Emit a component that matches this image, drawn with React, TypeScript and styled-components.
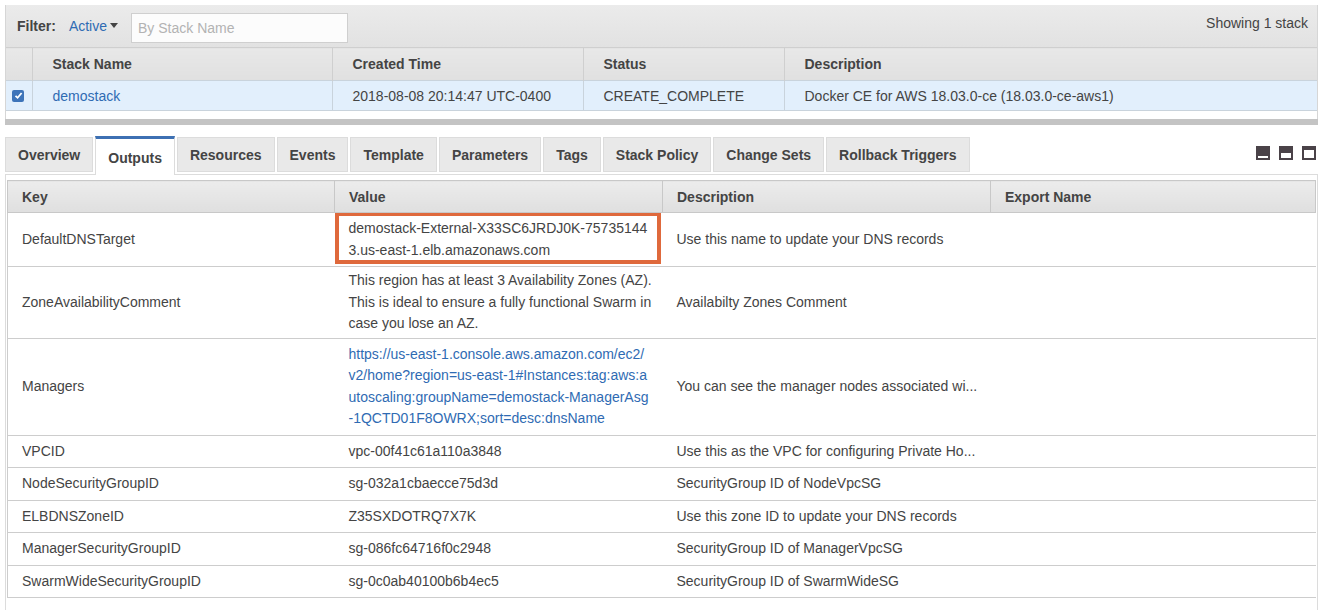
import React from 'react';
import styled, { createGlobalStyle } from 'styled-components';

const GlobalStyle = createGlobalStyle`
  body {
    margin: 0;
    background: #fff;
    font-family: "Liberation Sans", Arial, Helvetica, sans-serif;
    font-size: 14px;
    color: #444;
  }
`;

const LINK = '#2f6bb3';

interface Output {
  key: string;
  value: string[];
  description: string;
  link?: boolean;
  highlight?: boolean;
  compact?: boolean;
}

const OUTPUTS: Array<Output> = [
  {
    key: 'DefaultDNSTarget',
    value: ['demostack-External-X33SC6JRDJ0K-75735144', '3.us-east-1.elb.amazonaws.com'],
    description: 'Use this name to update your DNS records',
    highlight: true,
  },
  {
    key: 'ZoneAvailabilityComment',
    value: [
      'This region has at least 3 Availability Zones (AZ).',
      'This is ideal to ensure a fully functional Swarm in',
      'case you lose an AZ.',
    ],
    description: 'Availabilty Zones Comment',
    compact: true,
  },
  {
    key: 'Managers',
    value: [
      'https://us-east-1.console.aws.amazon.com/ec2/',
      'v2/home?region=us-east-1#Instances:tag:aws:a',
      'utoscaling:groupName=demostack-ManagerAsg',
      '-1QCTD01F8OWRX;sort=desc:dnsName',
    ],
    description: 'You can see the manager nodes associated wi...',
    link: true,
  },
  { key: 'VPCID', value: ['vpc-00f41c61a110a3848'], description: 'Use this as the VPC for configuring Private Ho...' },
  { key: 'NodeSecurityGroupID', value: ['sg-032a1cbaecce75d3d'], description: 'SecurityGroup ID of NodeVpcSG' },
  { key: 'ELBDNSZoneID', value: ['Z35SXDOTRQ7X7K'], description: 'Use this zone ID to update your DNS records' },
  { key: 'ManagerSecurityGroupID', value: ['sg-086fc64716f0c2948'], description: 'SecurityGroup ID of ManagerVpcSG' },
  { key: 'SwarmWideSecurityGroupID', value: ['sg-0c0ab40100b6b4ec5'], description: 'SecurityGroup ID of SwarmWideSG' },
];

const TABS = [
  'Overview',
  'Outputs',
  'Resources',
  'Events',
  'Template',
  'Parameters',
  'Tags',
  'Stack Policy',
  'Change Sets',
  'Rollback Triggers',
];

const Page = styled.div`
  width: 1329px;
  box-sizing: border-box;
  padding: 5px 11px 0 5px;
`;

const StackPanel = styled.section`
  border-left: 1px solid #d6d6d6;
  border-right: 1px solid #d6d6d6;
`;

const FilterBar = styled.div`
  display: flex;
  align-items: center;
  height: 42px;
  padding: 0 9px 0 11px;
  background: linear-gradient(#ebebeb, #e2e2e2);
`;

const FilterLabel = styled.span`
  font-weight: bold;
  color: #444;
  margin-right: 13px;
`;

const Dropdown = styled.span`
  display: inline-flex;
  align-items: center;
  color: ${LINK};
  margin-right: 13px;
  margin-top: -1px;
  &::after {
    content: '';
    margin-left: 3px;
    border-left: 4px solid transparent;
    border-right: 4px solid transparent;
    border-top: 5px solid #444;
  }
`;

const SearchInput = styled.input`
  width: 217px;
  height: 30px;
  box-sizing: border-box;
  border: 1px solid #cfcfcf;
  background: #fcfcfc;
  padding: 0 6px;
  font-family: inherit;
  font-size: 14px;
  color: #444;
  margin-top: 3px;
  &::placeholder {
    color: #b3b3b3;
  }
`;

const Showing = styled.span`
  margin-left: auto;
  align-self: flex-start;
  margin-top: 10px;
  color: #444;
`;

const Table = styled.table`
  width: 100%;
  border-collapse: collapse;
  table-layout: fixed;
`;

const StackTh = styled.th`
  height: 32px;
  padding: 0 20px;
  text-align: left;
  font-weight: bold;
  color: #444;
  background: linear-gradient(#e8e8e8, #e0e0e0);
  border-top: 1px solid #cfcfcf;
  border-right: 1px solid #cfcfcf;
  &:last-child {
    border-right: none;
  }
`;

const StackTd = styled.td`
  height: 29px;
  padding: 0 20px;
  background: #e2effc;
  border-top: 1px solid #c9d3dc;
  border-bottom: 1px solid #c9d3dc;
  border-right: 1px solid #c9d3dc;
  color: #444;
  &:last-child {
    border-right: none;
  }
`;

const CheckCell = styled(StackTd)`
  padding: 0 0 0 6px;
`;

const Checkbox = styled.span`
  display: flex;
  align-items: center;
  justify-content: center;
  width: 12px;
  height: 12px;
  border-radius: 2px;
  background: #3e74b9;
`;

const StackLink = styled.span`
  color: ${LINK};
`;

const PanelFoot = styled.div`
  height: 8px;
`;

const Divider = styled.div`
  height: 6px;
  background: #c4c4c4;
  margin: 0 -1px;
`;

const TabRow = styled.nav`
  display: flex;
  align-items: flex-start;
  gap: 2px;
  margin-top: 11px;
`;

const Tab = styled.div<{ $active?: boolean }>`
  position: relative;
  box-sizing: border-box;
  display: flex;
  align-items: center;
  padding: 0 12px;
  font-weight: bold;
  color: #444;
  height: ${p => (p.$active ? '39px' : '35px')};
  margin-top: ${p => (p.$active ? '0' : '1px')};
  margin-bottom: ${p => (p.$active ? '-1px' : '0')};
  padding-top: ${p => (p.$active ? '1px' : '0')};
  background: ${p => (p.$active ? '#fff' : '#e9e9e9')};
  border: 1px solid #dcdcdc;
  border-top: ${p => (p.$active ? '3px solid #3d70b3' : '1px solid #dcdcdc')};
  border-bottom: ${p => (p.$active ? 'none' : '1px solid #dcdcdc')};
  z-index: ${p => (p.$active ? 1 : 0)};
`;

const LayoutIcons = styled.div`
  display: flex;
  gap: 9px;
  margin-left: auto;
  margin-top: 10px;
  margin-right: 2px;
`;

const OutputBox = styled.div`
  border: 1px solid #dcdcdc;
  border-bottom: none;
  padding: 5px 1px 0 1px;
  min-height: 430px;
`;

const OutTh = styled.th`
  height: 31px;
  padding: 0 14px;
  text-align: left;
  font-weight: bold;
  color: #444;
  background: linear-gradient(#ececec, #dfdfdf);
  border: 1px solid #c8c8c8;
`;

const OutTd = styled.td<{ $highlight?: boolean; $link?: boolean; $compact?: boolean }>`
  position: relative;
  padding: ${p => (p.$compact ? '3px 14px' : '5px 14px')};
  line-height: 21.5px;
  color: ${p => (p.$link ? LINK : '#444')};
  border-bottom: 1px solid #cdcdcd;
  vertical-align: middle;
  white-space: nowrap;
  overflow: hidden;
  &::after {
    content: '';
    display: ${p => (p.$highlight ? 'block' : 'none')};
    position: absolute;
    top: -1px;
    left: 0;
    right: 2px;
    bottom: 2px;
    border: 4px solid #df693c;
    pointer-events: none;
  }
`;

const KeyTd = styled(OutTd)`
  border-left: 1px solid #cdcdcd;
`;

const Line = styled.span`
  display: block;
`;

const LayoutIcon: React.FC<{ variant: number }> = ({ variant }) => (
  <svg width="14" height="14" viewBox="0 0 14 14">
    <rect width="14" height="14" fill="#4a4248" />
    {variant === 0 && <rect x="2" y="10" width="10" height="2" fill="#fff" />}
    {variant === 1 && <rect x="2" y="7" width="10" height="5" fill="#fff" />}
    {variant === 2 && <rect x="2" y="4" width="10" height="8" fill="#fff" />}
  </svg>
);

export default function App() {
  return (
    <Page>
      <GlobalStyle />
      <StackPanel>
        <FilterBar>
          <FilterLabel>Filter:</FilterLabel>
          <Dropdown>Active</Dropdown>
          <SearchInput placeholder="By Stack Name" />
          <Showing>Showing 1 stack</Showing>
        </FilterBar>
        <Table>
          <colgroup>
            <col style={{ width: 26 }} />
            <col style={{ width: 300 }} />
            <col style={{ width: 251 }} />
            <col style={{ width: 201 }} />
            <col />
          </colgroup>
          <thead>
            <tr>
              <StackTh />
              <StackTh>Stack Name</StackTh>
              <StackTh>Created Time</StackTh>
              <StackTh>Status</StackTh>
              <StackTh>Description</StackTh>
            </tr>
          </thead>
          <tbody>
            <tr>
              <CheckCell>
                <Checkbox>
                  <svg width="9" height="9" viewBox="0 0 9 9">
                    <path d="M1.5 4.8 L3.6 6.8 L7.6 2" stroke="#fff" strokeWidth="1.8" fill="none" />
                  </svg>
                </Checkbox>
              </CheckCell>
              <StackTd>
                <StackLink>demostack</StackLink>
              </StackTd>
              <StackTd>2018-08-08 20:14:47 UTC-0400</StackTd>
              <StackTd>CREATE_COMPLETE</StackTd>
              <StackTd>Docker CE for AWS 18.03.0-ce (18.03.0-ce-aws1)</StackTd>
            </tr>
          </tbody>
        </Table>
        <PanelFoot />
        <Divider />
      </StackPanel>

      <TabRow>
        {TABS.map(t => (
          <Tab key={t} $active={t === 'Outputs'}>
            {t}
          </Tab>
        ))}
        <LayoutIcons>
          {[0, 1, 2].map(v => (
            <LayoutIcon key={v} variant={v} />
          ))}
        </LayoutIcons>
      </TabRow>

      <OutputBox>
        <Table>
          <colgroup>
            <col style={{ width: 327 }} />
            <col style={{ width: 328 }} />
            <col style={{ width: 328 }} />
            <col />
          </colgroup>
          <thead>
            <tr>
              <OutTh>Key</OutTh>
              <OutTh>Value</OutTh>
              <OutTh>Description</OutTh>
              <OutTh>Export Name</OutTh>
            </tr>
          </thead>
          <tbody>
            {OUTPUTS.map(o => (
              <tr key={o.key}>
                <KeyTd>{o.key}</KeyTd>
                <OutTd $highlight={o.highlight} $link={o.link} $compact={o.compact}>
                  {o.value.map((l, i) => (
                    <Line key={i}>{l}</Line>
                  ))}
                </OutTd>
                <OutTd>{o.description}</OutTd>
                <OutTd />
              </tr>
            ))}
          </tbody>
        </Table>
      </OutputBox>
    </Page>
  );
}
